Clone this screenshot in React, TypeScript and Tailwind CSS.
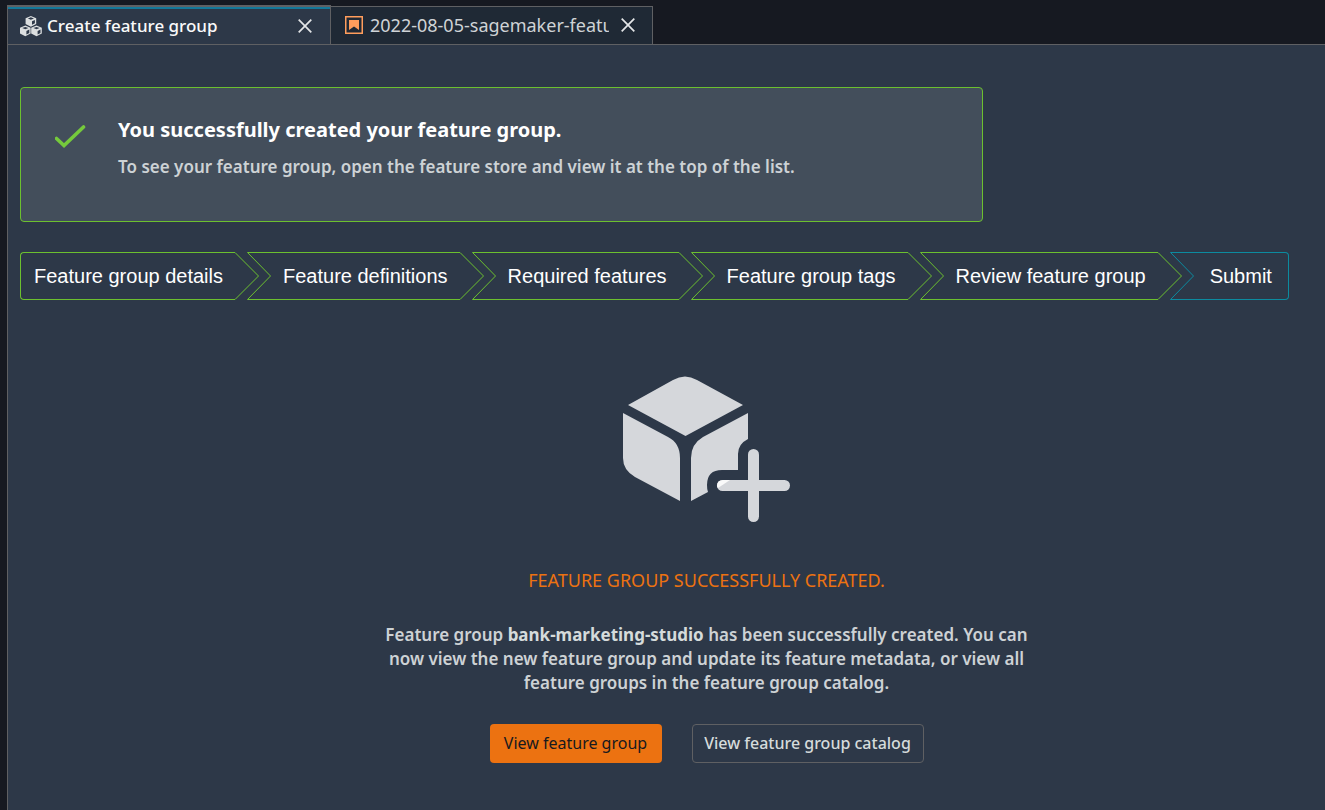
const steps = [
  { label: "Feature group details", done: true },
  { label: "Feature definitions", done: true },
  { label: "Required features", done: true },
  { label: "Feature group tags", done: true },
  { label: "Review feature group", done: true },
  { label: "Submit", done: false },
];

function Cube({ x, y }: { x: number; y: number }) {
  return (
    <g transform={`translate(${x} ${y})`}>
      <path d="M5.300 0 10.600 2.200V8L5.300 10.700 0 8V2.200Z" fill="#dcdfe0" />
      <path d="M2.200 2.500 5.300 1.300 8.400 2.500 5.300 3.700Z" fill="#2d3848" />
      <path d="M6.400 5.300 9.300 4V7.300L6.400 8.800Z" fill="#2d3848" />
    </g>
  );
}

function CubesIcon() {
  return (
    <svg className="h-[21px] w-[22px] shrink-0" viewBox="0 0 22 21" aria-hidden="true">
      <Cube x={5.6} y={0} />
      <Cube x={0} y={9.6} />
      <Cube x={11.2} y={9.6} />
    </svg>
  );
}

function NotebookIcon() {
  return (
    <svg className="size-[18px] shrink-0" viewBox="0 0 18 18" aria-hidden="true">
      <rect x=".75" y=".75" width="16.5" height="16.5" fill="none" stroke="#ff9d5c" strokeWidth="1.5" />
      <path d="M4 4H14V14L9 10.5 4 14Z" fill="#ff9d5c" />
    </svg>
  );
}

function CloseIcon() {
  return (
    <svg className="size-[14px]" viewBox="0 0 14 14" aria-hidden="true">
      <path d="M.7.7 13.3 13.3M13.3.7.7 13.3" stroke="#e4e6e8" strokeWidth="1.7" />
    </svg>
  );
}

function CubePlusIcon() {
  return (
    <svg className="h-[147px] w-[168px]" viewBox="0 0 168 147" aria-hidden="true">
      <g fill="#d5d7db">
        <path d="M5 29 50 4Q62-3 74 4L120 29 62.500 60Z" />
        <path d="M0 37 45 61Q57 67 57 82V125L12 101Q0 94 0 82Z" />
        <path d="M125 37V63Q115 68 115 78V94H99Q84 94 84 109 84 114 85 116L68 125V82Q68 68 80 61Z" />
        <rect x="125" y="73" width="11" height="73" rx="5.500" />
        <rect x="94" y="104" width="73" height="11" rx="5.500" />
      </g>
      <path d="M94 110Q94 104 100 104H107L95 112Q94 111 94 110Z" fill="#fafafa" />
    </svg>
  );
}

function Step({ label, done, first, last }: { label: string; done: boolean; first: boolean; last: boolean }) {
  const edge = done ? "border-[#6cc02f]" : "border-[#0c8ba0]";
  const stroke = done ? "stroke-[#6cc02f]" : "stroke-[#0c8ba0]";
  return (
    <li className={`flex h-12 ${first ? "" : "-ml-3"}`}>
      {!first && (
        <svg className={`h-12 w-6 shrink-0 fill-none ${stroke}`} viewBox="0 0 24 48" aria-hidden="true">
          <path d="M24 .5H.5L23.500 24 .5 47.500H24" />
        </svg>
      )}
      <span
        className={`flex items-center border-y text-xl whitespace-nowrap text-white ${edge} ${
          first ? "rounded-l-sm border-l pr-3 pl-[13px]" : last ? "rounded-r-sm border-r px-4" : "px-3"
        }`}
      >
        {label}
      </span>
      {!last && (
        <svg className={`h-12 w-6 shrink-0 fill-none ${stroke}`} viewBox="0 0 24 48" aria-hidden="true">
          <path d="M0 .5 23.500 24 0 47.500" />
        </svg>
      )}
    </li>
  );
}

export default function App() {
  return (
    <div className="flex min-h-screen flex-col bg-[#161921] pt-[5px] pl-[7px] font-['Noto_Sans',sans-serif] text-[#d5dbdb]">
      <div role="tablist" className="flex h-10 items-stretch border-b border-[#5f6063]">
        <div className="flex w-[324px] items-center border-x border-t-2 border-[#5f6063] bg-[#2d3848]">
          <div className="flex h-full w-full items-center border-t-2 border-[#147899] pr-[18px] pb-px pl-3">
            <CubesIcon />
            <button
              role="tab"
              aria-selected="true"
              className="ml-[5px] flex-1 text-left text-[17px] font-medium whitespace-nowrap text-[#fafafa]"
            >
              Create feature group
            </button>
            <button aria-label="Close Create feature group">
              <CloseIcon />
            </button>
          </div>
        </div>
        <div className="mt-px flex w-[322px] items-center border-t border-r border-[#5f6063] bg-[#1f2935] pr-[17px] pb-px pl-[14px]">
          <NotebookIcon />
          <button
            role="tab"
            aria-selected="false"
            className="mr-3 ml-[7px] min-w-0 flex-1 overflow-hidden text-left text-lg whitespace-nowrap text-[#cfd3d6]"
          >
            2022-08-05-sagemaker-feature-store
          </button>
          <button aria-label="Close notebook">
            <CloseIcon />
          </button>
        </div>
      </div>

      <main className="flex-1 border-l border-[#5f6063] bg-[#2d3848] px-3 pt-[42px] pb-10">
        <section
          role="status"
          className="flex h-[135px] max-w-[963px] rounded-sm border border-[#6cc02f] bg-[#434e5b] pt-7 pl-[34px]"
        >
          <svg className="mt-[9px] h-6 w-8 shrink-0" viewBox="0 0 32 24" aria-hidden="true">
            <path d="M1.500 13.500 9 20.500 28.500 2" fill="none" stroke="#75c93c" strokeWidth="3.600" strokeLinecap="round" />
          </svg>
          <div className="ml-[31px]">
            <h2 className="text-xl leading-7 font-bold text-white">You successfully created your feature group.</h2>
            <p className="mt-[11px] text-[17px] leading-6 font-semibold text-[#cdd2d5]">
              To see your feature group, open the feature store and view it at the top of the list.
            </p>
          </div>
        </section>

        <ol className="mt-[30px] flex font-['Liberation_Sans',sans-serif]">
          {steps.map((s, i) => (
            <Step key={s.label} {...s} first={i === 0} last={i === steps.length - 1} />
          ))}
        </ol>

        <section className="flex flex-col items-center pt-[76px] pl-20 text-center">
          <CubePlusIcon />
          <h1 className="mt-[45px] text-lg leading-6 text-[#ec7211] uppercase">Feature group successfully created.</h1>
          <p className="mt-[31px] max-w-[660px] text-[17px] leading-6 font-semibold text-[#cdd2d5]">
            Feature group <strong className="font-bold text-[#d5dbdb]">bank-marketing-studio</strong> has been successfully created. You
            can now view the new feature group and update its feature metadata, or view all feature groups in the feature group catalog.
          </p>
          <div className="mt-[29px] flex gap-[30px]">
            <button className="h-[39px] w-[172px] rounded-sm bg-[#ec7211] pb-px text-base text-[#16191f]">View feature group</button>
            <button className="h-[39px] w-[232px] rounded-sm border border-[#5f6063] pb-px text-base font-medium">
              View feature group catalog
            </button>
          </div>
        </section>
      </main>
    </div>
  );
}
